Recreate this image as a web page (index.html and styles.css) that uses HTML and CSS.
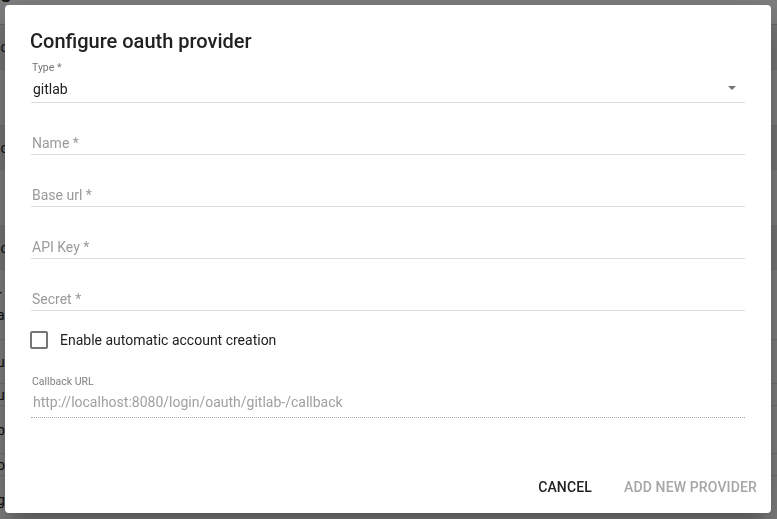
FILE: index.html
```html
<!DOCTYPE html>
<html lang="en">
<head>
<meta charset="utf-8">
<title>Configure oauth provider</title>
<link rel="stylesheet" href="styles.css">
</head>
<body>
<div class="page">
  <div class="page-head">gitlab</div>
  <div class="page-row h45 band"><span class="cut">lo</span></div>
  <div class="page-row h56"></div>
  <div class="page-row h44 band"><span class="cut">lo</span></div>
  <div class="page-row h56"></div>
  <div class="page-row h44 band"><span class="cut">lo</span></div>
  <div class="page-row h70"><span class="cut">r</span><span class="cut">a</span></div>
  <div class="page-row h44"><span class="cut">u</span></div>
  <div class="page-row h22"><span class="cut">uc</span></div>
  <div class="page-row h48"><span class="cut">b</span></div>
  <div class="page-row h22"><span class="cut">o</span></div>
  <div class="page-row h48"><span class="cut">gl</span></div>
</div>
<div class="backdrop"></div>
<div class="modal">
  <div class="dialog" role="dialog">
    <h2 class="title">Configure oauth provider</h2>
    <div class="content">
      <div class="select-field">
        <div class="small-label">Type *</div>
        <div class="select-input">
          <span>gitlab</span>
          <svg class="arrow" width="8" height="4" viewBox="0 0 10 5"><path d="M0 0l5 5 5-5z" fill="#757575"/></svg>
        </div>
      </div>
      <div class="field"><div class="ph">Name *</div></div>
      <div class="field"><div class="ph">Base url *</div></div>
      <div class="field"><div class="ph">API Key *</div></div>
      <div class="field"><div class="ph">Secret *</div></div>
      <label class="check-row">
        <span class="checkbox"></span>
        <span class="check-label">Enable automatic account creation</span>
      </label>
      <div class="callback">
        <div class="small-label light">Callback URL</div>
        <div class="disabled-input">http://localhost:8080/login/oauth/gitlab-/callback</div>
      </div>
    </div>
    <div class="actions">
      <button class="btn">CANCEL</button>
      <button class="btn disabled">ADD NEW PROVIDER</button>
    </div>
  </div>
</div>
</body>
</html>
```

FILE: styles.css
```css
html, body {
  margin: 0;
  padding: 0;
  height: 100%;
  overflow: hidden;
}
body {
  font-family: Roboto, "Liberation Sans", sans-serif;
  background: #ffffff;
  color: #212121;
}
.page {
  display: flex;
  flex-direction: column;
  height: 100%;
}
.page-head {
  font-size: 22px;
  line-height: 22px;
  margin-top: -21px;
  color: #222;
  flex: 0 0 46px;
  box-sizing: border-box;
  border-bottom: 1px solid #ccc;
}
.page-row {
  display: flex;
  flex-direction: column;
  justify-content: center;
  gap: 4px;
  font-size: 14px;
  color: #222;
  box-sizing: border-box;
  border-bottom: 1px solid #e4e4e4;
}
.h22 { flex: 0 0 22px; }
.h44 { flex: 0 0 44px; }
.h45 { flex: 0 0 45px; }
.h48 { flex: 0 0 48px; }
.h56 { flex: 0 0 56px; }
.h70 { flex: 0 0 70px; }
.page-row.band {
  background: #ececec;
}
.cut {
  display: block;
  margin-left: -3px;
  line-height: 16px;
}
.backdrop {
  position: fixed;
  inset: 0;
  background: rgba(0, 0, 0, 0.5);
}
.modal {
  position: fixed;
  inset: 0;
  display: flex;
  align-items: flex-start;
  padding: 5px 0 0 5px;
}
.dialog {
  width: 766px;
  height: 508px;
  background: #fff;
  border-radius: 4px;
  box-shadow: 0 11px 15px -7px rgba(0,0,0,0.2), 0 24px 38px 3px rgba(0,0,0,0.14), 0 9px 46px 8px rgba(0,0,0,0.12);
  display: flex;
  flex-direction: column;
  box-sizing: border-box;
}
.title {
  margin: 0;
  padding: 24px 24px 0 25px;
  font-size: 20px;
  font-weight: 500;
  line-height: 24px;
  color: #212121;
}
.content {
  flex: 1;
  padding: 0 26px;
}
.small-label {
  font-size: 10.5px;
  line-height: 12px;
  color: #757575;
  margin-top: 9px;
  padding-left: 1px;
}
.select-input {
  display: flex;
  align-items: center;
  justify-content: space-between;
  font-size: 14px;
  line-height: 20px;
  padding: 5px 0 3px 2px;
  border-bottom: 1px solid #dcdcdc;
  color: #212121;
}
.arrow {
  margin-right: 9px;
  margin-top: -2px;
}
.field {
  padding-top: 30px;
}
.ph {
  font-size: 14px;
  line-height: 20px;
  padding: 0 0 1px 1px;
  color: #9a9a9a;
  border-bottom: 1px solid #dcdcdc;
}
.check-row {
  display: flex;
  align-items: center;
  height: 24px;
  margin-top: 17px;
  margin-left: -1px;
  gap: 12px;
}
.checkbox {
  width: 18px;
  height: 18px;
  box-sizing: border-box;
  border: 2px solid #757575;
  border-radius: 2px;
}
.check-label {
  font-size: 14px;
  color: #212121;
}
.callback {
  margin-top: 24px;
}
.small-label.light {
  margin-top: 0;
  color: #808080;
}
.disabled-input {
  font-size: 14px;
  line-height: 20px;
  padding: 4px 0 5px 2px;
  color: #a0a0a0;
  border-bottom: 1px dotted #a8a8a8;
}
.actions {
  display: flex;
  justify-content: flex-end;
  gap: 16px;
  padding: 8px 6px 8px 8px;
}
.btn {
  font-family: Roboto, "Liberation Sans", sans-serif;
  font-size: 14px;
  font-weight: 500;
  line-height: 24px;
  letter-spacing: 0.14px;
  padding: 6px 8px;
  border: 0;
  background: transparent;
  color: #212121;
  min-width: 64px;
}
.btn.disabled {
  color: #a6a6a6;
}
```
